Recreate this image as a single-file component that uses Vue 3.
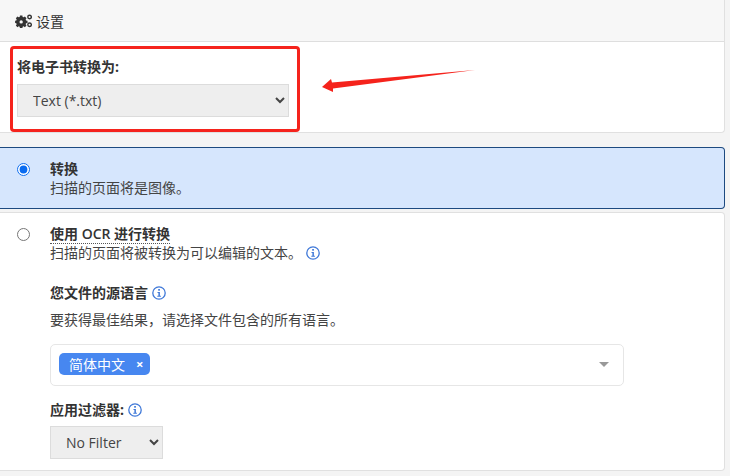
<script setup>
import { ref } from 'vue';

const format = ref('txt');
const ocr = ref('convert');
const filter = ref('none');
</script>

<template>
  <div class="page">
    <section class="card settings">
      <header class="card-header">
        <svg class="gears" viewBox="0 0 18 15" width="17" height="14">
          <path fill="#333" fill-rule="evenodd" d="M5.2 1.5h2.600l.3 1.600 1 .5 1.400-.8 1.700 1.800-.9 1.300.4 1.100 1.600.3v2.400l-1.600.3-.4 1.100.9 1.300-1.700 1.700-1.400-.9-1 .5-.3 1.600H5.200l-.3-1.600-1-.5-1.400.9L.8 12.400l.9-1.300-.4-1.100L0 9.700V7.300l1.300-.3.4-1.100L.8 4.600l1.700-1.800 1.400.8 1-.5zM6.500 6.700a1.800 1.800 0 1 0 0 3.600 1.800 1.800 0 0 0 0-3.600z" />
          <circle cx="15.500" cy="3.200" r="1.900" fill="none" stroke="#333" stroke-width="1.500" />
          <circle cx="15.500" cy="11.500" r="1.900" fill="none" stroke="#333" stroke-width="1.500" />
        </svg>
        <span>设置</span>
      </header>
      <div class="card-body">
        <label class="field-label">将电子书转换为:</label>
        <select v-model="format" class="native-select format-select">
          <option value="txt">Text (*.txt)</option>
        </select>
      </div>
      <!-- annotation drawn over the screenshot -->
      <div class="red-box"></div>
      <svg class="red-arrow" viewBox="0 0 160 30" width="160" height="30">
        <path fill="#f5231c" d="M2 19 11 11l1 3.500L155 2 13 20.500 13 24z" />
      </svg>
    </section>

    <div class="option selected">
      <input v-model="ocr" class="radio" type="radio" value="convert" />
      <div class="option-text">
        <div class="option-title">转换</div>
        <div class="option-desc">扫描的页面将是图像。</div>
      </div>
    </div>

    <div class="option">
      <input v-model="ocr" class="radio" type="radio" value="ocr" />
      <div class="option-text">
        <div class="option-title"><span class="dotted">使用 <span class="latin">OCR</span> 进行转换</span></div>
        <div class="option-desc with-info">
          扫描的页面将被转换为可以编辑的文本。
          <svg class="info" viewBox="0 0 14 14" width="14" height="14">
            <circle cx="7" cy="7" r="6.200" fill="none" stroke="#3f78d8" stroke-width="1.300" />
            <rect x="6.200" y="3" width="1.700" height="1.700" fill="#3f78d8" />
            <path fill="#3f78d8" d="M5.500 6h2.400v3.800h1v1H5.300v-1h1.100V7h-.9z" />
          </svg>
        </div>

        <div class="sub-label source-label">
          您文件的源语言
          <svg class="info" viewBox="0 0 14 14" width="14" height="14">
            <circle cx="7" cy="7" r="6.200" fill="none" stroke="#3f78d8" stroke-width="1.300" />
            <rect x="6.200" y="3" width="1.700" height="1.700" fill="#3f78d8" />
            <path fill="#3f78d8" d="M5.500 6h2.400v3.800h1v1H5.300v-1h1.100V7h-.9z" />
          </svg>
        </div>
        <div class="hint">要获得最佳结果，请选择文件包含的所有语言。</div>

        <div class="tag-select">
          <span class="tag">简体中文<span class="tag-close">×</span></span>
          <span class="caret"></span>
        </div>

        <div class="sub-label filter-label">
          应用过滤器:
          <svg class="info" viewBox="0 0 14 14" width="14" height="14">
            <circle cx="7" cy="7" r="6.200" fill="none" stroke="#3f78d8" stroke-width="1.300" />
            <rect x="6.200" y="3" width="1.700" height="1.700" fill="#3f78d8" />
            <path fill="#3f78d8" d="M5.500 6h2.400v3.800h1v1H5.300v-1h1.100V7h-.9z" />
          </svg>
        </div>
        <select v-model="filter" class="native-select filter-select">
          <option value="none">No Filter</option>
        </select>
      </div>
    </div>
  </div>
</template>

<style scoped>
.page {
  width: 730px;
  height: 476px;
  overflow: hidden;
  box-sizing: border-box;
  padding-right: 5px;
  background: #f4f4f4;
  color: #333;
  font-family: "Open Sans", "Noto Sans CJK SC", sans-serif;
  font-size: 14px;
}

.card {
  position: relative;
  background: #fff;
  border: 1px solid #e0e0e0;
  border-left: none;
  border-top: none;
  border-radius: 0 0 4px 0;
}

.card-header {
  height: 42px;
  box-sizing: border-box;
  display: flex;
  align-items: center;
  gap: 4px;
  padding-left: 15px;
  background: #f7f7f7;
  border-bottom: 1px solid #dedede;
  color: #333;
}

.gears {
  flex: none;
}

.card-body {
  height: 90px;
  box-sizing: border-box;
  padding: 16px 0 0 17px;
}

.field-label {
  display: block;
  line-height: 18px;
  font-weight: 700;
  color: #333;
  margin-bottom: 8px;
}

.native-select {
  display: block;
  box-sizing: border-box;
  height: 33px;
  background-color: #eee;
  border: 1px solid #dcdcdc;
  border-radius: 0;
  color: #444;
  font-family: inherit;
  font-size: 14px;
  padding-left: 11px;
  outline: none;
}

.format-select {
  width: 272px;
}

.filter-select {
  width: 113px;
}

.red-box {
  position: absolute;
  left: 10px;
  top: 46px;
  width: 290px;
  height: 86px;
  box-sizing: border-box;
  border: 3px solid #f5231c;
  border-radius: 4px;
}

.red-arrow {
  position: absolute;
  left: 320px;
  top: 68px;
}

.option {
  display: flex;
  background: #fff;
  border: 1px solid #e0e0e0;
  border-left: none;
  border-radius: 0 4px 4px 0;
  margin-top: 3px;
  height: 259px;
  box-sizing: border-box;
}

.option.selected {
  margin-top: 14px;
  height: 62px;
  background: #d6e6fd;
  border: 1px solid #1d4a80;
  border-left: none;
}

.radio {
  flex: none;
  width: 13px;
  height: 13px;
  margin: 15px 0 0 17px;
  accent-color: #0b6cf0;
}

.option-text {
  margin-left: 20px;
  flex: 1;
  padding-top: 11px;
}

.option-title {
  font-weight: 700;
  line-height: 19px;
  color: #333;
}

.latin {
  font-weight: 600;
}

.dotted {
  border-bottom: 1px dotted #555;
}

.option-desc {
  line-height: 20px;
  color: #444;
}

.with-info {
  display: flex;
  align-items: center;
  gap: 4px;
}

.info {
  flex: none;
}

.sub-label {
  display: flex;
  align-items: center;
  gap: 4px;
  font-weight: 700;
  line-height: 20px;
  color: #333;
}

.source-label {
  margin-top: 20px;
}

.hint {
  margin-top: 7px;
  line-height: 20px;
  color: #444;
}

.tag-select {
  width: 574px;
  height: 42px;
  box-sizing: border-box;
  margin-top: 14px;
  display: flex;
  align-items: center;
  justify-content: space-between;
  padding: 0 14px 2px 8px;
  border: 1px solid #e6e6e6;
  border-radius: 5px;
}

.tag {
  display: inline-flex;
  align-items: center;
  height: 22px;
  padding: 0 7px 0 10px;
  background: #4787f0;
  border-radius: 5px;
  color: #fff;
}

.tag-close {
  margin-left: 11px;
  font-weight: 700;
  font-size: 13px;
}

.caret {
  width: 0;
  height: 0;
  border-left: 5px solid transparent;
  border-right: 5px solid transparent;
  border-top: 5px solid #999;
}

.filter-label {
  margin-top: 14px;
  margin-bottom: 6px;
}
</style>

<style>
html,
body {
  margin: 0;
  background: #f4f4f4;
}
</style>
